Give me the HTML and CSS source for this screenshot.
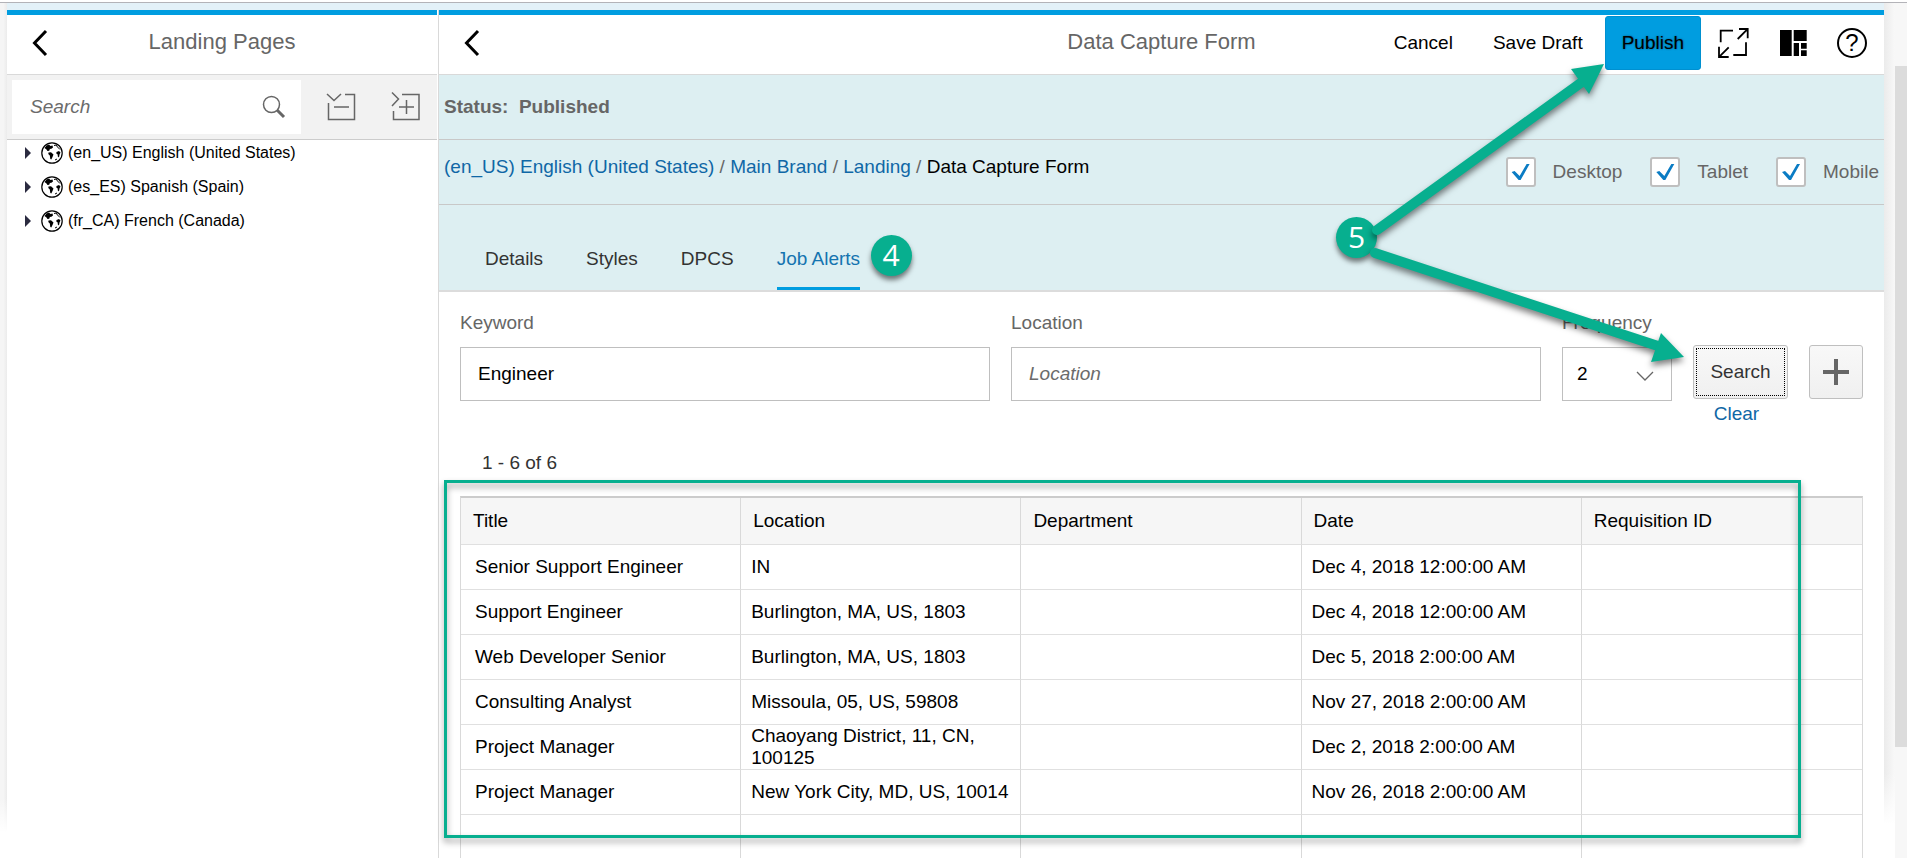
FILE: index.html
```html
<!DOCTYPE html>
<html lang="en">
<head>
  <meta charset="UTF-8">
  <title>Data Capture Form</title>
  <link rel="stylesheet" href="styles.css">
</head>
<body>
  <svg class="sprite" aria-hidden="true">
    <symbol id="globe" viewBox="0 0 22 22">
      <circle cx="11" cy="11" r="10.2" fill="#fff" stroke="#000" stroke-width="1.2"/>
      <path d="M3.500 6 5.500 3.500 8 2.500 9.500 4 11.500 3.500 12 5.500 10 7 9 6.700 8.200 8.700 6.500 9 5.500 7.500z"/>
      <path d="M7.500 10.500 10 10.200 12.500 12.500 11.500 15 10.300 17.500 9.300 17 8.800 13.500 7.300 12z"/>
      <path d="M15.500 10 18 9 19.500 10.500 18.500 12.500 18 15.500 16.800 14.500 16.700 12.500 15.300 11.500z"/>
      <path d="M13 3.500 15 3 16.500 5 19 7.500M14 18l2-1" fill="none" stroke="#000"/>
    </symbol>
    <symbol id="back" viewBox="0 0 16 28">
      <path d="M14 2 2.500 14 14 26" fill="none" stroke="#000" stroke-width="3"/>
    </symbol>
  </svg>

  <div class="page">
    <div class="gutter-left"></div>
    <div class="workspace">

      <aside class="sidebar">
        <header class="bar">
          <button class="back" aria-label="Back"><svg width="16" height="28"><use href="#back"/></svg></button>
          <h2>Landing Pages</h2>
        </header>
        <div class="tools">
          <div class="search-box">
            <input type="text" placeholder="Search" aria-label="Search pages">
            <button aria-label="Search">
              <svg width="24" height="24" viewBox="0 0 24 24" fill="none" stroke="#666">
                <circle cx="9.500" cy="9.500" r="8" stroke-width="1.500"/>
                <path d="M15 15 22 22" stroke-width="3"/>
              </svg>
            </button>
          </div>
          <button aria-label="Collapse all">
            <svg width="32" height="32" viewBox="0 0 32 32" fill="none" stroke="#666" stroke-width="1.500">
              <path d="M3 3 10 9.500 17 3M21 3.500H30.500V28.500H4.500V12M10 16H25"/>
            </svg>
          </button>
          <button aria-label="Expand all">
            <svg width="32" height="32" viewBox="0 0 32 32" fill="none" stroke="#666" stroke-width="1.500">
              <path d="M3 1.500 9.500 8 3 15M13 3.500H30V28.500H4.500V20M10 16H25M17.500 9V23"/>
            </svg>
          </button>
        </div>
        <ul class="tree">
          <li><span class="caret"></span><svg width="22" height="22"><use href="#globe"/></svg>(en_US) English (United States)</li>
          <li><span class="caret"></span><svg width="22" height="22"><use href="#globe"/></svg>(es_ES) Spanish (Spain)</li>
          <li><span class="caret"></span><svg width="22" height="22"><use href="#globe"/></svg>(fr_CA) French (Canada)</li>
        </ul>
      </aside>

      <main class="main">
        <header class="bar">
          <button class="back" aria-label="Back"><svg width="16" height="28"><use href="#back"/></svg></button>
          <h2>Data Capture Form</h2>
          <div class="actions">
            <button>Cancel</button>
            <button>Save Draft</button>
            <button class="publish">Publish</button>
            <div class="icons">
              <button aria-label="Full screen">
                <svg width="34" height="34" viewBox="0 0 34 34" fill="none" stroke="#000" stroke-width="1.800">
                  <path d="M4.700 16.300V4.700H17M21.700 13 31.300 3.400M23 3H31.700V12.300M12.700 21.300 3.400 30.600M3 20.700V31H12.700M17.300 29H30V16.300"/>
                </svg>
              </button>
              <button aria-label="Layout">
                <svg width="27" height="26" viewBox="0 0 27 26">
                  <path d="M0 0H11.700V26H0zM13.700 0H26.700V11H13.700zM13.700 13H19V26H13.700zM21 13H26.700V18.700H21zM21 20.300H26.700V26H21z"/>
                </svg>
              </button>
              <button class="help" aria-label="Help">?</button>
            </div>
          </div>
        </header>

        <div class="band status">Status:&nbsp; Published</div>
        <div class="band path">
          <nav>
            <a href="#">(en_US) English (United States)</a> / <a href="#">Main Brand</a> / <a href="#">Landing</a> / <span>Data Capture Form</span>
          </nav>
          <div class="devices">
            <label><input type="checkbox" checked>Desktop</label>
            <label><input type="checkbox" checked>Tablet</label>
            <label><input type="checkbox" checked>Mobile</label>
          </div>
        </div>
        <nav class="tabs">
          <a href="#">Details</a>
          <a href="#">Styles</a>
          <a href="#">DPCS</a>
          <a href="#" class="active">Job Alerts<span class="badge badge-4">4</span></a>
        </nav>

        <section class="content">
          <form class="filters">
            <div class="field grow">
              <label for="keyword">Keyword</label>
              <input type="text" id="keyword" value="Engineer">
            </div>
            <div class="field grow">
              <label for="location">Location</label>
              <input type="text" id="location" placeholder="Location">
            </div>
            <div class="field frequency">
              <label for="frequency">Frequency</label>
              <div class="select-wrap">
                <select id="frequency"><option>1</option><option selected>2</option><option>3</option></select>
                <svg width="18" height="10" viewBox="0 0 18 10" fill="none" stroke="#666" stroke-width="1.300"><path d="M1 1 9 9 17 1"/></svg>
              </div>
            </div>
            <div class="submit">
              <button type="button" class="btn search-btn">Search</button>
              <a href="#">Clear</a>
            </div>
            <div class="submit">
              <button type="button" class="btn add-btn" aria-label="Add">
                <svg width="26" height="26" viewBox="0 0 26 26" stroke="#666" stroke-width="4"><path d="M13 0V26M0 13H26"/></svg>
              </button>
            </div>
          </form>

          <p class="count">1 - 6 of 6</p>

          <div class="results">
            <table>
              <thead>
                <tr><th>Title</th><th>Location</th><th>Department</th><th>Date</th><th>Requisition ID</th></tr>
              </thead>
              <tbody>
                <tr><td>Senior Support Engineer</td><td>IN</td><td></td><td>Dec 4, 2018 12:00:00 AM</td><td></td></tr>
                <tr><td>Support Engineer</td><td>Burlington, MA, US, 1803</td><td></td><td>Dec 4, 2018 12:00:00 AM</td><td></td></tr>
                <tr><td>Web Developer Senior</td><td>Burlington, MA, US, 1803</td><td></td><td>Dec 5, 2018 2:00:00 AM</td><td></td></tr>
                <tr><td>Consulting Analyst</td><td>Missoula, 05, US, 59808</td><td></td><td>Nov 27, 2018 2:00:00 AM</td><td></td></tr>
                <tr><td>Project Manager</td><td>Chaoyang District, 11, CN, 100125</td><td></td><td>Dec 2, 2018 2:00:00 AM</td><td></td></tr>
                <tr><td>Project Manager</td><td>New York City, MD, US, 10014</td><td></td><td>Nov 26, 2018 2:00:00 AM</td><td></td></tr>
                <tr><td></td><td></td><td></td><td></td><td></td></tr>
              </tbody>
            </table>
            <div class="highlight"></div>
          </div>
        </section>
      </main>
    </div>
    <div class="gutter-right"></div>
    <div class="scrollbar"><div class="thumb"></div></div>

    <!-- callout 5 with its two arrows -->
    <div class="callout">
      <span class="badge badge-5">5</span>
      <svg width="360" height="320" viewBox="0 0 360 320" fill="#07af8f" stroke="#07af8f">
        <path d="M41 173 246 25M39 196 325 290" stroke-width="10" stroke-linecap="round"/>
        <path d="M235 12 268 7 253 37zM325 276 348 300 315 305z" stroke="none"/>
      </svg>
    </div>
  </div>
</body>
</html>
```
FILE: styles.css
```css
* {
  box-sizing: border-box;
}
body {
  margin: 0;
  font-family: "Liberation Sans", Arial, sans-serif;
  font-size: 19px;
  line-height: 22px;
  color: #000;
  background: #fff;
}
button, input, select {
  font: inherit;
  color: inherit;
}
button {
  background: none;
  border: none;
  padding: 0;
  cursor: pointer;
}
svg {
  display: block;
}
a {
  color: #0f67a6;
  text-decoration: none;
}
.sprite {
  position: absolute;
  width: 0;
  height: 0;
}

/* page frame */
.page {
  position: relative;
  display: flex;
  height: 100vh;
  padding-top: 2px;
  overflow: hidden;
}
.gutter-left, .gutter-right, .workspace, .scrollbar {
  border-top: 1px solid #b3b3b8;
}
.gutter-left {
  width: 7px;
  background: linear-gradient(to bottom, transparent 93%, #fff 97%), linear-gradient(to right, #f5f5f5 50%, #ebebeb);
}
.gutter-right {
  width: 11px;
  background: linear-gradient(to bottom, transparent 90%, #fff 96%), linear-gradient(to right, #ebebeb, #f8f8f8);
}
.workspace {
  flex: 1;
  min-width: 0;
  display: flex;
  padding-top: 7px;
  background: #e3f1f8;
}
.scrollbar {
  width: 12px;
  padding-top: 63px;
  background: #f7f7f7;
}
.thumb {
  height: 86%;
  background: #dcdcdc;
}

/* title bars */
.bar {
  display: grid;
  grid-template-columns: 1fr auto 1fr;
  align-items: center;
  height: 65px;
  padding-bottom: 4px;
  border-top: 5px solid #009de0;
  border-bottom: 1px solid #d9d9d9;
}
.bar h2 {
  margin: 0 0 2px;
  font-size: 22px;
  line-height: 26px;
  font-weight: normal;
  color: #666;
}
.back {
  justify-self: start;
  margin-left: 25px;
}

/* sidebar */
.sidebar {
  width: 431px;
  background: #fff;
  border-right: 1px solid #fff;
}
.tools {
  display: flex;
  align-items: center;
  gap: 33px;
  height: 65px;
  padding: 5px 16px 5px 5px;
  background: #f2f2f2;
  border-bottom: 1px solid #ccc;
}
.search-box {
  flex: 1;
  min-width: 0;
  display: flex;
  align-items: center;
  height: 54px;
  margin-right: -10px;
  padding: 0 15px 0 18px;
  background: #fff;
}
.search-box input {
  flex: 1;
  min-width: 0;
  border: none;
  padding: 0;
}
::placeholder {
  font-style: italic;
  color: #6b6b6b;
  opacity: 1;
}
.tree {
  list-style: none;
  display: flex;
  flex-direction: column;
  gap: 10px;
  margin: 0;
  padding: 1px 18px;
  font-size: 16px;
}
.tree li {
  display: flex;
  align-items: center;
  height: 24px;
}
.tree svg {
  margin: 0 5px 0 10px;
}
.caret {
  border: solid transparent;
  border-width: 6px 0 6px 6px;
  border-left-color: #2b2b40;
}

/* main column */
.main {
  flex: 1;
  min-width: 0;
  background: #fff;
  border-left: 1px solid #d9d9d9;
}
.actions {
  display: flex;
  align-items: center;
  justify-content: flex-end;
}
.actions > button {
  height: 54px;
  padding: 0 20px;
}
.actions .publish {
  padding: 0 16px;
  background: #009de0;
  border: 1px solid #0090d0;
  border-radius: 3px;
  text-shadow: 0 0 2px rgba(0,0,0,0.5);
}
.actions > .publish {
  margin-left: 2px;
}
.icons {
  display: flex;
  align-items: center;
  gap: 30px;
  padding: 0 17px 0 15px;
}
.help {
  width: 30px;
  height: 30px;
  border: 2px solid #000;
  border-radius: 50%;
  font-size: 24px;
  line-height: 26px;
}
.band {
  display: flex;
  align-items: center;
  height: 65px;
  padding: 0 5px;
  background: #ddeff2;
  border-bottom: 1px solid #c8c8c8;
}
.status {
  font-weight: bold;
  color: #666;
}
.path {
  justify-content: space-between;
  color: #666;
}
.path nav {
  padding-bottom: 10px;
}
.path nav span {
  color: #000;
}
.devices {
  display: flex;
  gap: 28px;
}
.devices label {
  display: flex;
  align-items: center;
  gap: 17px;
}
.devices input {
  appearance: none;
  width: 30px;
  height: 30px;
  margin: 0;
  background: #fff;
  border: 2px solid #bfbfbf;
  border-radius: 3px;
}
.devices input:checked::after {
  content: "";
  display: block;
  width: 26px;
  height: 26px;
  background: #0a7cc4;
  clip-path: polygon(4px 13px, 7px 12px, 12px 17px, 19px 5px, 22px 5px, 13px 21px, 11px 21px);
}
.tabs {
  display: flex;
  gap: 43px;
  height: 87px;
  padding: 43px 46px 0;
  background: #ddeff2;
  border-bottom: 2px solid #dcdcdc;
}
.tabs a {
  position: relative;
  height: 42px;
  color: #333;
}
.tabs .active {
  color: #1474b0;
  border-bottom: 3px solid #009de0;
}

/* filters */
.content {
  padding: 20px 21px;
}
.filters {
  display: flex;
  gap: 21px;
}
.field label {
  display: block;
  margin-bottom: 13px;
  color: #666;
}
.grow {
  flex: 1;
}
.frequency {
  width: 110px;
}
.field input, .field select {
  width: 100%;
  height: 54px;
  padding: 0 17px;
  border: 1px solid #bfbfbf;
  border-radius: 0;
  background: #fff;
}
.field select {
  appearance: none;
  padding: 0 14px;
}
.select-wrap {
  position: relative;
}
.select-wrap svg {
  position: absolute;
  right: 18px;
  top: 24px;
  pointer-events: none;
}
.submit {
  display: flex;
  flex-direction: column;
  align-items: center;
  gap: 4px;
  padding-top: 33px;
}
.submit a {
  margin-right: 8px;
}
.btn {
  height: 54px;
  background: linear-gradient(#f8f8f8, #f0f0f0);
  border: 1px solid #bfbfbf;
  border-radius: 3px;
  color: #333;
}
.search-btn {
  width: 95px;
  outline: 1px dotted #000;
  outline-offset: -4px;
}
.add-btn {
  display: flex;
  align-items: center;
  justify-content: center;
  width: 54px;
}
.count {
  margin: 27px 0 22px;
  padding-left: 22px;
  color: #333;
}

/* results table */
.results {
  position: relative;
}
table {
  width: 100%;
  table-layout: fixed;
  border-collapse: separate;
  border-spacing: 0;
  border: 1px solid #d9d9d9;
  border-top: 2px solid #ccc;
}
th, td {
  padding: 0 0 0 12px;
  border-right: 1px solid #d9d9d9;
  border-bottom: 1px solid #e0e0e0;
  text-align: left;
}
th:last-child, td:last-child {
  border-right: none;
}
th {
  height: 47px;
  font-weight: normal;
  background: #f6f6f6;
}
td {
  height: 45px;
  padding-left: 14px;
}
td + td {
  padding-left: 10px;
}

/* callouts */
.highlight {
  position: absolute;
  top: -16px;
  left: -16px;
  right: 62px;
  height: 358px;
  border: 3px solid #07af8f;
  filter: drop-shadow(0 4px 3px rgba(0,0,0,0.4));
  pointer-events: none;
}
.badge {
  position: absolute;
  width: 41px;
  height: 41px;
  border-radius: 50%;
  background: #07af8f;
  box-shadow: 0 4px 5px rgba(0,0,0,0.5);
  color: #fff;
  font-family: "Open Sans", sans-serif;
  font-size: 30px;
  line-height: 39px;
  text-align: center;
}
.badge-4 {
  left: 94px;
  top: -13px;
}
.callout {
  position: absolute;
  top: 57px;
  right: 211px;
  width: 360px;
  height: 320px;
  pointer-events: none;
}
.callout svg {
  position: relative;
  filter: drop-shadow(0 4px 3px rgba(0,0,0,0.5));
}
.badge-5 {
  left: 0;
  top: 160px;
}
```
